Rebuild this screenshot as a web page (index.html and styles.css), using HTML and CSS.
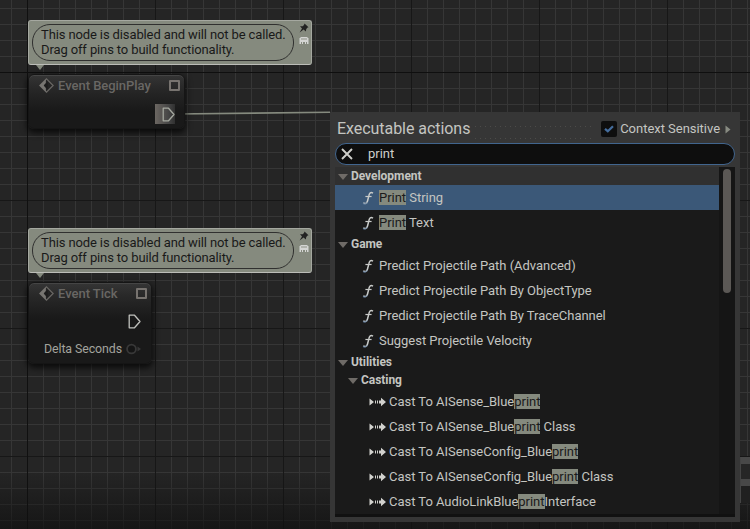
FILE: index.html
```html
<!DOCTYPE html>
<html lang="en">
<head>
<meta charset="utf-8">
<title>Blueprint Event Graph</title>
<link rel="stylesheet" href="styles.css">
</head>
<body>
<svg class="defs" width="0" height="0">
  <defs>
    <symbol id="event" viewBox="0 0 14 14"><path d="M7 .8 13.2 7 7 13.2 .8 7Z" fill="#242424" stroke="#696764" stroke-width="1.2"/><path d="M.4 7 6.4 1.2V4.6L4.4 7 6.4 9.4V12.8Z" fill="#777571"/><path d="M4.6 7 8 3.8V10.2Z" fill="#1c1c1c"/></symbol>
    <symbol id="exec" viewBox="0 0 13 15"><path d="M1.2 1.2H6.5L12 7.5 6.5 13.8H1.2Z" fill="none" stroke="currentColor" stroke-width="1.3" stroke-linejoin="round"/></symbol>
    <symbol id="fn" viewBox="0 0 12 14"><path d="M11 2.1C8.6 .6 7.4 2 7 4.2L5.6 9.8C5 12.4 3.4 13.2 1.2 12" fill="none" stroke="#c9cbc9" stroke-width="1.5"/><path d="M3.4 5.5H9.6" stroke="#c9cbc9" stroke-width="1.2"/><path d="M1 12.7C2.6 13.5 4.3 13 5.2 11.4" fill="none" stroke="#41658e" stroke-width=".9"/></symbol>
    <symbol id="cast" viewBox="0 0 17 10"><path d="M.5 1.5 5 5 .5 8.5ZM6 3.5h1v3H6zM8 3.5h1v3H8zM10 3.5h2V.8L17 5 12 9.2V6.5H10Z" fill="#d2d2ce"/></symbol>
    <symbol id="pin" viewBox="0 0 10 10"><path d="M5.5 .5 9.5 4.2 8.2 4.8 7.2 6.2 6.8 8.6 4.6 6.6 .6 9.6 3 5.4 1 3.2 3.7 3.2 5 2Z" fill="#222"/></symbol>
    <symbol id="bubble" viewBox="0 0 10 9"><path d="M1.5 1H8.5V2H9.5V8H8V6H7V8H6V6H4V8H3V6H2V8H.5V2H1.5Z" fill="#d4d5d3"/><path d="M2 3H8" stroke="#8d9186"/></symbol>
  </defs>
</svg>
<main class="graph">
  <svg class="wires" width="750" height="529"><path d="M176 114 330 112.3" stroke="#858a7e" stroke-width="1.6"/></svg>
  <div class="fade"></div>
  <div class="far-node"></div>

  <section class="block begin">
    <div class="comment">
      <p>This node is disabled and will not be called.<br>Drag off pins to build functionality.</p>
      <div class="tools"><svg width="10" height="10"><use href="#pin"/></svg><svg width="10" height="9"><use href="#bubble"/></svg></div>
    </div>
    <div class="node node-begin">
      <header><svg width="15" height="15"><use href="#event"/></svg><h2>Event BeginPlay</h2><i class="delegate"></i></header>
      <div class="exec-row"><span class="hot"><svg width="13" height="15"><use href="#exec"/></svg></span></div>
    </div>
  </section>

  <section class="block tick">
    <div class="comment">
      <p>This node is disabled and will not be called.<br>Drag off pins to build functionality.</p>
      <div class="tools"><svg width="10" height="10"><use href="#pin"/></svg><svg width="10" height="9"><use href="#bubble"/></svg></div>
    </div>
    <div class="node node-tick">
      <header><svg width="15" height="15"><use href="#event"/></svg><h2>Event Tick</h2><i class="delegate"></i></header>
      <div class="exec-row"><svg width="13" height="15"><use href="#exec"/></svg></div>
      <div class="data-row"><span>Delta Seconds</span><svg width="15" height="12" viewBox="0 0 15 12"><circle cx="5.5" cy="6" r="4.4" fill="#151515" stroke="#383838" stroke-width="1.8"/><path d="M11.5 3.5 15 6 11.5 8.5Z" fill="#383838"/></svg></div>
    </div>
  </section>

  <aside class="menu">
    <div class="menu-head">
      <h1>Executable actions</h1>
      <span class="dots"></span>
      <span class="check"><svg width="10" height="8" viewBox="0 0 10 8"><path d="M1 3.8 3.8 6.2 9 1.2" fill="none" stroke="#456d9d" stroke-width="2.2"/></svg></span>
      <span class="context">Context Sensitive</span>
      <svg class="more" width="6" height="9"><path d="M.5 .5 5.5 4.5 .5 8.5Z" fill="#888b82"/></svg>
    </div>
    <div class="search"><svg width="12" height="12" viewBox="0 0 12 12"><path d="M1 1 11 11M11 1 1 11" stroke="#cfcfca" stroke-width="1.9"/></svg><span>print</span></div>
    <div class="list">
      <div class="rows">
        <div class="cat first"><i></i>Development</div>
        <div class="row selected"><svg width="12" height="14"><use href="#fn"/></svg><span><mark>Print</mark> String</span></div>
        <div class="row"><svg width="12" height="14"><use href="#fn"/></svg><span><mark>Print</mark> Text</span></div>
        <div class="cat"><i></i>Game</div>
        <div class="row"><svg width="12" height="14"><use href="#fn"/></svg><span>Predict Projectile Path (Advanced)</span></div>
        <div class="row"><svg width="12" height="14"><use href="#fn"/></svg><span>Predict Projectile Path By ObjectType</span></div>
        <div class="row"><svg width="12" height="14"><use href="#fn"/></svg><span>Predict Projectile Path By TraceChannel</span></div>
        <div class="row"><svg width="12" height="14"><use href="#fn"/></svg><span>Suggest Projectile Velocity</span></div>
        <div class="cat"><i></i>Utilities</div>
        <div class="cat sub"><i></i>Casting</div>
        <div class="row cast"><svg width="17" height="10"><use href="#cast"/></svg><span>Cast To AISense_Blue<mark>print</mark></span></div>
        <div class="row cast"><svg width="17" height="10"><use href="#cast"/></svg><span>Cast To AISense_Blue<mark>print</mark> Class</span></div>
        <div class="row cast"><svg width="17" height="10"><use href="#cast"/></svg><span>Cast To AISenseConfig_Blue<mark>print</mark></span></div>
        <div class="row cast"><svg width="17" height="10"><use href="#cast"/></svg><span>Cast To AISenseConfig_Blue<mark>print</mark> Class</span></div>
        <div class="row cast"><svg width="17" height="10"><use href="#cast"/></svg><span>Cast To AudioLinkBlue<mark>print</mark>Interface</span></div>
      </div>
      <div class="scroll"><i></i></div>
    </div>
  </aside>
</main>
</body>
</html>
```
FILE: styles.css
```css
* { box-sizing: border-box; margin: 0; padding: 0; }
body { font: 13px/15px Roboto, "Liberation Sans", sans-serif; letter-spacing: -.03px; color: #c4c5c1; background: #252525; overflow: hidden; }
svg { display: block; flex: none; }
.defs { position: absolute; }
.graph {
  position: relative; width: 750px; height: 529px; overflow: hidden;
  background:
    linear-gradient(#101010, #101010) 27px 0 / 1px 100% no-repeat,
    linear-gradient(#0f0f0f, #0f0f0f) 0 72px / 100% 1px no-repeat,
    linear-gradient(90deg, #171717 1px, transparent 1px) 27px 0 / 128px 128px,
    linear-gradient(#171717 1px, transparent 1px) 0 72px / 128px 128px,
    linear-gradient(90deg, #363636 1px, transparent 1px) 11px 0 / 16px 16px,
    linear-gradient(#363636 1px, transparent 1px) 0 8px / 16px 16px,
    #252525;
}
.wires { position: absolute; inset: 0; }
.fade { position: absolute; left: 0; right: 0; bottom: 0; height: 58px; background: linear-gradient(transparent, rgba(15, 15, 15, .68)); }
.far-node { position: absolute; left: 740px; top: 457px; width: 20px; height: 46px; border-left: 1px solid #444; background: linear-gradient(#484848 7px, #262626 7px 22px, #484848 22px 29px, #202020 29px); }

.block { position: absolute; left: 28px; }
.begin { top: 20px; }
.tick { top: 228px; }
.comment { position: relative; display: flex; width: 284px; height: 45px; padding: 4px 3px 4px 4px; gap: 5px; background: #858a7e; border: 1px solid #a5a8a0; border-bottom-color: #bcbdb8; border-radius: 3px; margin-bottom: 9px; }
.comment::after { content: ""; position: absolute; left: 7px; top: 44px; border: 4px solid transparent; border-top: 5px solid #858a7e; border-bottom: 0; }
.comment p { flex: none; width: 262px; height: 37px; margin: -1px 0 0 -1px; padding: 2px 0 0 8px; border: 1px solid #30302f; border-radius: 18px; color: #191919; letter-spacing: -.12px; white-space: nowrap; }
.tools { display: flex; flex-direction: column; gap: 3px; margin-top: -2px; }
.node { position: relative; border-radius: 6px; border: 1px solid #151515; background: linear-gradient(#353535, #292929 12px, #222 22px, #191919 36px, #191919); box-shadow: 0 3px 6px 1px rgba(0, 0, 0, .7), inset 0 1px 0 #454545; }
.node-begin { width: 157px; height: 55px; }
.node-tick { width: 124px; height: 82px; }
.node header { display: flex; align-items: center; height: 24px; padding: 0 4px 3px 10px; gap: 4px; }
.node h2 { flex: 1; font-size: 13px; font-weight: 500; color: #696764; }
.delegate { width: 11px; height: 11px; margin-top: -1px; border: 2px solid #77736f; border-radius: 1px; }
.exec-row { display: flex; justify-content: flex-end; color: #c0c1bd; }
.node-begin .exec-row { padding: 5px 9px 0 0; }
.hot { display: flex; justify-content: flex-end; align-items: center; width: 20px; height: 20px; background: linear-gradient(90deg, #6c6762, #444 70%, #303030); color: #a5a89f; }
.node-tick .exec-row { padding: 7px 10px 0 0; }
.data-row { display: flex; align-items: center; justify-content: flex-end; gap: 4px; padding: 12px 10px 0 0; font-size: 12.4px; letter-spacing: -.1px; color: #a3a39d; }

.menu { position: absolute; left: 330px; top: 112px; width: 410px; height: 410px; padding: 0 5px 5px; background: #363636; }
.menu-head { display: flex; align-items: center; height: 31px; padding: 3px 4px 0 2px; }
.menu h1 { font-size: 16px; line-height: 20px; font-weight: 400; letter-spacing: -.05px; color: #c4c5c1; }
.dots { flex: 1; height: 13px; margin: 7px 8px 0 5px; background: radial-gradient(circle at .5px .5px, #4c4b49 .6px, transparent .8px) 0 0 / 5px 12px; }
.check { display: grid; place-items: center; width: 16px; height: 16px; border-radius: 2px; background: #0e0e0e; margin-right: 3px; }
.context { margin-top: -1px; }
.more { margin-left: 5px; }
.search { display: flex; align-items: center; height: 22px; padding: 0 0 1px 5px; gap: 15px; border: 1px solid #41658e; border-radius: 11px; background: #0e0e0e; color: #cfcfca; }
.list { display: flex; height: 350px; margin-top: 2px; background: #1a1a1a; border-bottom: 3px solid #111; }
.rows { width: 384px; }
.cat { display: flex; align-items: center; height: 18px; padding: 1px 0 0 3px; gap: 3px; font-size: 12px; font-weight: 700; letter-spacing: -.05px; }
.cat i { border: 5px solid transparent; border-top: 6px solid #6f6b67; border-bottom: 0; }
.cat.sub { padding-left: 13px; }
.cat.first { background: #303030; }
.row { display: flex; align-items: center; height: 25px; padding-left: 27px; gap: 5px; white-space: pre; }
.row.cast { padding-left: 34px; gap: 3px; }
.selected { background: #3b5878; }
mark { background: #858a7e; color: #1b1b1b; }
.scroll { width: 16px; padding: 2px 4px; background: #151515; }
.scroll i { display: block; width: 8px; height: 124px; border-radius: 4px; background: #5b5855; }
```
